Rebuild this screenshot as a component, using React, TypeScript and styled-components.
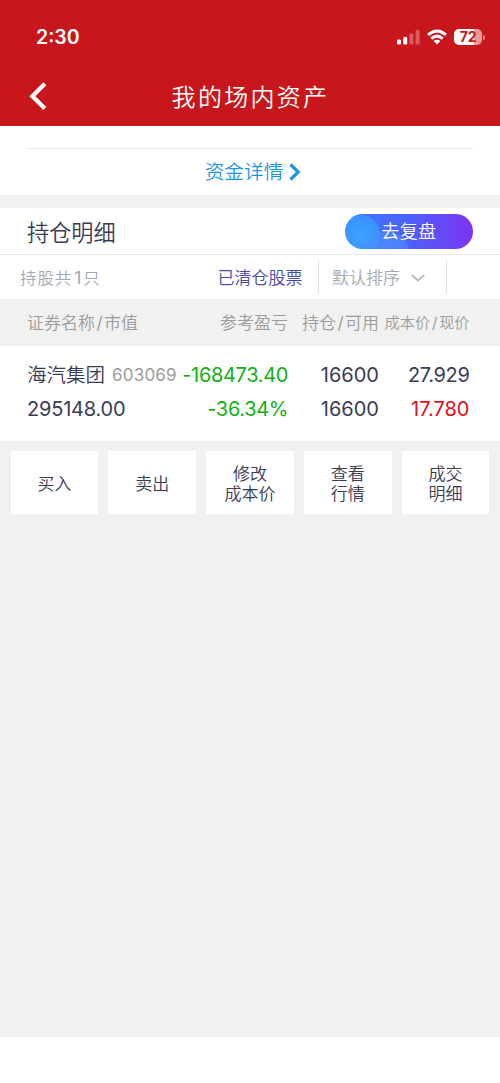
import React from "react";
import styled, { createGlobalStyle } from "styled-components";

const Global = createGlobalStyle`
  *, *::before, *::after { box-sizing: border-box; }
  body {
    margin: 0;
    background: #f1f1f1;
    color: #3a3c54;
    font-family: Inter, "Noto Sans CJK SC DemiLight", "Noto Sans CJK SC", sans-serif;
  }
`;

const Screen = styled.div`
  height: 1083px;
  width: 500px;
  display: flex;
  flex-direction: column;
  overflow: hidden;
  background: #f1f1f1;
`;

const Header = styled.header`
  height: 125.5px;
  flex: none;
  background: #c8171c;
  color: #fff;
`;

const StatusBar = styled.div`
  height: 67px;
  padding: 7px 15px 0 36px;
  display: flex;
  align-items: center;
  justify-content: space-between;
`;

const Clock = styled.span`
  font-size: 19.5px;
  font-weight: 600;
  line-height: 24px;
`;

const StatusIcons = styled.div`
  display: flex;
  align-items: center;
`;

const WifiIcon = styled.svg`
  margin-left: 6px;
`;

const Battery = styled.div`
  width: 28px;
  height: 16px;
  margin-left: 7px;
  border-radius: 5px;
  background: linear-gradient(90deg, #fff 72%, #e99a9c 72%);
  color: #c8171c;
  font-size: 14px;
  font-weight: 700;
  line-height: 16px;
  letter-spacing: -0.3px;
  text-align: center;
`;

const BatteryTip = styled.div`
  width: 2px;
  height: 5px;
  margin-left: 1px;
  border-radius: 0 2px 2px 0;
  background: #e58b8d;
`;

const NavBar = styled.div`
  height: 58px;
  display: grid;
  grid-template-columns: 60px 1fr 60px;
  align-items: center;
`;

const BackIcon = styled.svg`
  margin-left: 28px;
  display: block;
`;

const Title = styled.h1`
  margin: 0;
  padding: 3px 0 0 1px;
  font-size: 24px;
  font-weight: 300;
  line-height: 36px;
  letter-spacing: 2.3px;
  text-align: center;
`;

const FundPanel = styled.section`
  height: 69.5px;
  flex: none;
  padding: 22px 27px 0;
  background: #fff;
`;

const FundLink = styled.div`
  height: 47px;
  border-top: 1px solid #e8e8ec;
  display: flex;
  align-items: center;
  justify-content: center;
  gap: 6px;
  padding: 1px 0 0 6px;
  color: #1d97e0;
  font-size: 19.7px;
  line-height: 30px;
`;

const Holdings = styled.section`
  margin-top: 13px;
  flex: none;
  background: #fff;
`;

const HoldingsHead = styled.div`
  height: 47px;
  padding: 0 27px;
  border-bottom: 1px solid #e7e7ec;
  display: flex;
  align-items: center;
  justify-content: space-between;
`;

const SectionTitle = styled.h2`
  margin: 3px 0 0;
  font-size: 22.2px;
  font-weight: 400;
  line-height: 32px;
`;

const ReviewButton = styled.button`
  width: 128px;
  height: 35px;
  padding: 1px 0 0;
  border: 0;
  border-radius: 18px;
  background:
    radial-gradient(circle at 43px 39px, rgba(84, 158, 255, 0.6) 0, rgba(76, 140, 255, 0.6) 21px, transparent 21.8px),
    radial-gradient(circle at 15px 21px, #3aa2ff 0, #3b91ff 20px, transparent 20.8px),
    linear-gradient(90deg, #3a7cff 0%, #4b62fb 48%, #7c34f3 100%);
  color: #fff;
  font-family: inherit;
  font-size: 18px;
  line-height: 34px;
  letter-spacing: 0.5px;
`;

const FilterBar = styled.div`
  height: 44px;
  display: flex;
  align-items: center;
  font-size: 17px;
  line-height: 26px;
`;

const Count = styled.span`
  width: 197.5px;
  padding: 1px 0 0 20px;
  color: #a1a8bc;
  font-size: 16.4px;
  letter-spacing: 1px;
`;

const Digit = styled.span`
  padding: 0 1px 0 2px;
  font-size: 17.5px;
`;

const Cleared = styled.span`
  width: 120.5px;
  padding: 1px 0 0 20px;
  margin-right: -20px;
  flex: none;
  color: #4b48ae;
`;

const Sort = styled.div`
  width: 129px;
  height: 34px;
  margin-left: 20px;
  padding: 1px 0 0 13px;
  border: 1px solid #e1e2e8;
  border-width: 0 1px;
  display: flex;
  align-items: center;
  gap: 11px;
  color: #a3a7b5;
`;

const Row = styled.div<{ $head?: boolean }>`
  height: ${(p) => (p.$head ? "47px" : "34.5px")};
  padding-left: 27px;
  display: grid;
  grid-template-columns: 153px 108px 91px 90.5px;
  align-items: center;
  white-space: nowrap;
  background: ${(p) => (p.$head ? "#f1f1f1" : "#fff")};
  color: ${(p) => (p.$head ? "#9b9b9b" : "inherit")};
  font-size: ${(p) => (p.$head ? "17px" : "20px")};
  line-height: 28px;
`;

const tones = { plain: "inherit", loss: "#12b012", gain: "#e20d18" };

const Cell = styled.span<{ $tone?: keyof typeof tones; $small?: boolean; $tight?: boolean }>`
  justify-self: end;
  color: ${(p) => tones[p.$tone ?? "plain"]};
  font-size: ${(p) => (p.$small ? "15.2px" : "inherit")};
  letter-spacing: ${(p) => (p.$tight ? "-0.35px" : "normal")};
`;

const MarketValue = styled.span`
  letter-spacing: -0.2px;
`;

const NameCell = styled.span`
  display: flex;
  align-items: center;
  gap: 7px;
`;

const StockName = styled.span`
  font-size: 19.5px;
`;

const Code = styled.span`
  color: #9b9b9b;
  font-size: 17px;
  letter-spacing: 0.2px;
`;

const Slash = styled.span`
  display: inline-block;
  width: 9px;
  text-align: center;
`;

const Position = styled.div`
  height: 95px;
  padding-top: 11.5px;
`;

const Actions = styled.div`
  flex: 1;
  padding: 10px 10.7px 0;
  display: grid;
  grid-template-columns: repeat(5, 1fr);
  grid-auto-rows: 63px;
  gap: 10.4px;
`;

const Action = styled.button`
  padding: 3px 0 0;
  border: 0;
  background: #fff;
  color: #3a3c54;
  font-family: inherit;
  font-size: 17px;
  line-height: 20.5px;
  white-space: pre-line;
`;

const HomeArea = styled.footer`
  height: 46px;
  flex: none;
  background: #fff;
`;

const actions = ["买入", "卖出", "修改\n成本价", "查看\n行情", "成交\n明细"];

export default function App() {
  return (
    <Screen>
      <Global />
      <Header>
        <StatusBar>
          <Clock>2:30</Clock>
          <StatusIcons>
            <svg width="24" height="16" viewBox="0 0 24 16" fill="#fff">
              <rect x="0" y="10.5" width="4" height="5" rx="1.2" />
              <rect x="6.2" y="8" width="4" height="7.5" rx="1.2" />
              <rect x="12.4" y="4.5" width="4" height="11" rx="1.2" opacity=".3" />
              <rect x="18.6" y="1" width="4" height="14.5" rx="1.2" opacity=".3" />
            </svg>
            <WifiIcon width="20" height="16" viewBox="0 0 20 16" fill="none" stroke="#fff" strokeWidth="3">
              <path d="M1 5.9Q10-2 19 5.9" />
              <path d="M4.3 9.6Q10 4.7 15.7 9.6" />
              <path d="M10 15.5 6.6 12.1Q10 9.3 13.4 12.1Z" fill="#fff" stroke="none" />
            </WifiIcon>
            <Battery>72</Battery>
            <BatteryTip />
          </StatusIcons>
        </StatusBar>
        <NavBar>
          <BackIcon width="20" height="30" viewBox="0 0 20 30" fill="none" stroke="#fff" strokeWidth="4.2">
            <path d="M16.8 2.8 4.4 15.2 16.8 27.6" />
          </BackIcon>
          <Title>我的场内资产</Title>
        </NavBar>
      </Header>

      <FundPanel>
        <FundLink>
          资金详情
          <svg width="12" height="18" viewBox="0 0 12 18" fill="none" stroke="#1d97e0" strokeWidth="3.2">
            <path d="M1.5 1.5 9.2 9 1.5 16.5" />
          </svg>
        </FundLink>
      </FundPanel>

      <Holdings>
        <HoldingsHead>
          <SectionTitle>持仓明细</SectionTitle>
          <ReviewButton>去复盘</ReviewButton>
        </HoldingsHead>
        <FilterBar>
          <Count>持股共<Digit>1</Digit>只</Count>
          <Cleared>已清仓股票</Cleared>
          <Sort>
            默认排序
            <svg width="14" height="8" viewBox="0 0 14 8" fill="none" stroke="#b3b6c0" strokeWidth="1.6">
              <path d="M.7.9 7 6.6 13.3.9" />
            </svg>
          </Sort>
        </FilterBar>
        <Row $head>
          <span>证券名称<Slash>/</Slash>市值</span>
          <Cell>参考盈亏</Cell>
          <Cell>持仓<Slash>/</Slash>可用</Cell>
          <Cell $small>成本价<Slash>/</Slash>现价</Cell>
        </Row>
        <Position>
          <Row>
            <NameCell>
              <StockName>海汽集团</StockName>
              <Code>603069</Code>
            </NameCell>
            <Cell $tone="loss" $tight>-168473.40</Cell>
            <Cell>16600</Cell>
            <Cell $tight>27.929</Cell>
          </Row>
          <Row>
            <MarketValue>295148.00</MarketValue>
            <Cell $tone="loss" $tight>-36.34%</Cell>
            <Cell>16600</Cell>
            <Cell $tone="gain">17.780</Cell>
          </Row>
        </Position>
      </Holdings>

      <Actions>
        {actions.map((label) => (
          <Action key={label}>{label}</Action>
        ))}
      </Actions>
      <HomeArea />
    </Screen>
  );
}
